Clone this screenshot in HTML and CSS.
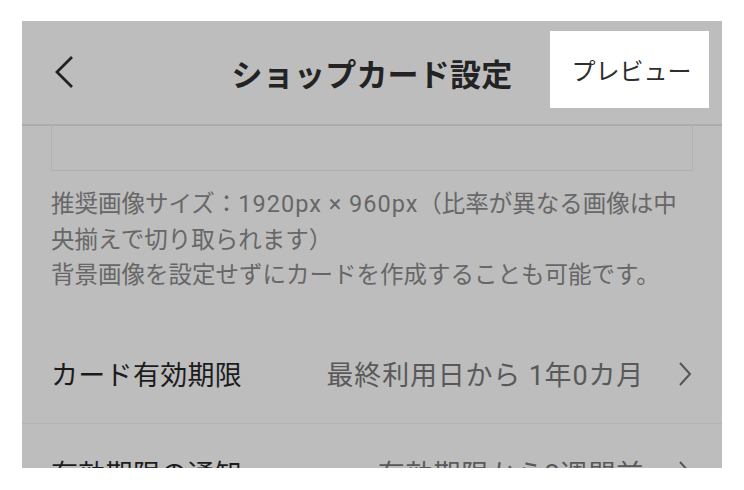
FILE: index.html
```html
<!DOCTYPE html>
<html lang="ja">
<head>
<meta charset="utf-8">
<title>ショップカード設定</title>
<link rel="stylesheet" href="styles.css">
</head>
<body>
<div class="screen">
  <header class="header">
    <div class="header-left">
      <button class="back" aria-label="戻る">
        <svg width="22" height="34" viewBox="0 0 22 34"><polyline points="17,2 2,17 17,32" fill="none" stroke="#222" stroke-width="2.8" stroke-linejoin="miter"/></svg>
      </button>
    </div>
    <h1 class="title">ショップカード設定</h1>
    <div class="header-right">
      <button class="preview">プレビュー</button>
    </div>
  </header>
  <main class="content">
    <div class="image-box"></div>
    <p class="note">推奨画像サイズ：<span class="latin">1920px × 960px</span>（比率が異なる画像は中央揃えで切り取られます）<br>背景画像を設定せずにカードを作成することも可能です。</p>
    <ul class="rows">
      <li class="row">
        <span class="label">カード有効期限</span>
        <span class="value">最終利用日から 1年0カ月
          <svg class="chev" width="14" height="24" viewBox="0 0 14 24"><polyline points="2,1 12,12 2,23" fill="none" stroke="#555" stroke-width="2"/></svg>
        </span>
      </li>
      <li class="row">
        <span class="label">有効期限の通知</span>
        <span class="value">有効期限から2週間前
          <svg class="chev" width="14" height="24" viewBox="0 0 14 24"><polyline points="2,1 12,12 2,23" fill="none" stroke="#555" stroke-width="2"/></svg>
        </span>
      </li>
    </ul>
  </main>
</div>
</body>
</html>
```
FILE: styles.css
```css
* { box-sizing: border-box; }
html, body { margin: 0; padding: 0; background: #ffffff; }
body { font-family: Roboto, "Noto Sans CJK JP", sans-serif; }

.screen {
  margin: 21px 0 0 22px;
  width: 700px;
  height: 447px;
  overflow: hidden;
  background: #bdbdbd;
}

.header {
  height: 105px;
  border-bottom: 2px solid #adadad;
  display: grid;
  grid-template-columns: 1fr auto 1fr;
  align-items: center;
  padding: 0 13px;
}
.header-left { display: flex; align-items: center; }
.back {
  margin-left: 20px;
  margin-top: -2px;
  padding: 0;
  border: 0;
  background: none;
  display: flex;
}
.title {
  margin: 0;
  font-size: 31px;
  font-weight: 700;
  color: #232323;
  letter-spacing: 0.2px;
  margin-top: -1px;
}
.header-right {
  display: flex;
  justify-content: flex-end;
  align-self: start;
  padding-top: 10px;
}
.preview {
  width: 159px;
  height: 77px;
  border: 0;
  background: #ffffff;
  font-family: "Noto Sans CJK JP", sans-serif;
  font-size: 24px;
  color: #2e2e2e;
  padding: 0 0 0 4px;
}

.content { padding: 0; }
.image-box {
  margin: 0 29px;
  height: 45px;
  border: 1px solid #b1b1b1;
  border-top: 0;
}
.note {
  margin: 16px 29px 0 29px;
  font-size: 23.5px;
  line-height: 35.5px;
  color: #676767;
}
.latin { letter-spacing: 1px; }
.rows { list-style: none; margin: 31px 0 0 0; padding: 0; }
.row {
  height: 99px;
  border-bottom: 1px solid #b3b3b3;
  display: flex;
  align-items: center;
  justify-content: space-between;
  padding: 0 30px 0 29px;
  font-family: "Noto Sans CJK JP", sans-serif;
}
.label { font-size: 27px; color: #1c1c1c; letter-spacing: 0.3px; }
.value {
  font-family: Roboto, "Noto Sans CJK JP", sans-serif;
  font-size: 27px;
  color: #595959;
  display: flex;
  align-items: center;
  letter-spacing: 0.8px;
}
.chev { margin-left: 34px; }
```
